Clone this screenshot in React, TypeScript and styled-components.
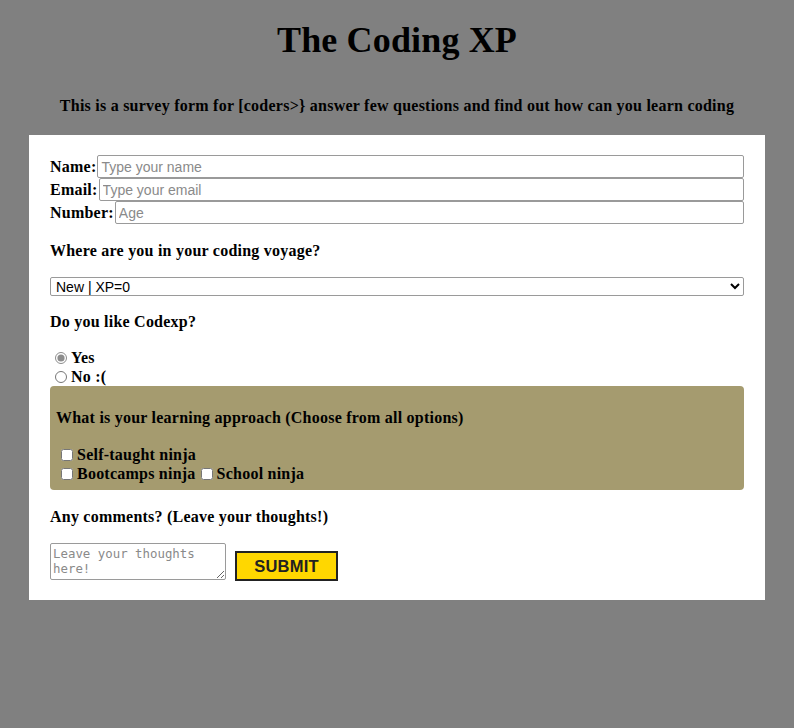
import React from "react";
import styled, { createGlobalStyle } from "styled-components";

const Global = createGlobalStyle`
  html, body {
    margin: 0;
    padding: 0;
    background: #808080;
    font-family: "Liberation Serif", "Times New Roman", serif;
    color: #000;
  }
`;

const Page = styled.div`
  min-height: 728px;
  padding-top: 20px;
  box-sizing: border-box;
`;

const Title = styled.h1`
  margin: 0;
  text-align: center;
  font-size: 36px;
  line-height: 41px;
  font-weight: bold;
  letter-spacing: 0.15px;
`;

const Subtitle = styled.h4`
  margin: 36px 0 20px;
  text-align: center;
  font-size: 16px;
  line-height: 18px;
  font-weight: bold;
  letter-spacing: 0.24px;
`;

const Panel = styled.form`
  width: 736px;
  margin: 0 auto;
  background: #fff;
  box-sizing: border-box;
  padding: 20px 21px 20px;
  display: flex;
  flex-direction: column;
  letter-spacing: 0.23px;
`;

const FieldRow = styled.label`
  display: flex;
  align-items: center;
  height: 23px;
  font-size: 16px;
  font-weight: bold;
  line-height: 18px;
`;

const TextInput = styled.input`
  flex: 1;
  height: 23px;
  box-sizing: border-box;
  margin: 0 0 0 1px;
  border: 1px solid #9a9a9a;
  border-radius: 2px;
  padding: 1px 3px;
  font-family: "Liberation Sans", Arial, sans-serif;
  font-size: 14px;
  letter-spacing: 0;
  &::placeholder {
    color: #8a8a8a;
  }
`;

const Question = styled.h4<{ $top: number }>`
  margin: ${(p) => p.$top}px 0 0;
  font-size: 16px;
  line-height: 18px;
  font-weight: bold;
`;

const Select = styled.select`
  margin-top: 17px;
  height: 19px;
  box-sizing: border-box;
  border: 1px solid #9a9a9a;
  border-radius: 2px;
  font-family: "Liberation Sans", Arial, sans-serif;
  font-size: 14px;
  letter-spacing: 0;
  padding: 0 1px;
  background: #fff;
  color: #000;
`;

const RadioGroup = styled.div`
  margin-top: 17px;
  display: flex;
  flex-direction: column;
`;

const ChoiceLine = styled.div`
  display: flex;
  align-items: center;
  height: 19px;
  font-size: 16px;
  font-weight: bold;
`;

const Radio = styled.input.attrs({ type: "radio" })`
  width: 12px;
  height: 12px;
  margin: 0 4px 0 5px;
  accent-color: #8c8c8c;
`;

const Approach = styled.div`
  background: #a59b6f;
  border-radius: 4px;
  padding: 23px 6px 7px;
  display: flex;
  flex-direction: column;
`;

const ApproachTitle = styled.h4`
  margin: 0 0 18px;
  font-size: 16px;
  line-height: 18px;
  font-weight: bold;
`;

const Check = styled.input.attrs({ type: "checkbox" })`
  width: 12px;
  height: 12px;
  margin: 0 4px 0 5px;
  accent-color: #fff;
`;

const Bottom = styled.div`
  margin-top: 17px;
  display: flex;
  align-items: flex-end;
  gap: 9px;
`;

const Comments = styled.textarea`
  width: 176px;
  height: 37px;
  box-sizing: border-box;
  margin: 0;
  border: 1px solid #9a9a9a;
  border-radius: 2px;
  padding: 2px 2px;
  font-family: "DejaVu Sans Mono", "Liberation Mono", monospace;
  font-size: 12.4px;
  line-height: 15px;
  letter-spacing: 0;
  &::placeholder {
    color: #8a8a8a;
  }
`;

const Submit = styled.button`
  width: 103px;
  height: 30px;
  margin-bottom: -1px;
  background: #ffd700;
  border: 2px solid #222;
  font-family: "Liberation Sans", Arial, sans-serif;
  font-weight: bold;
  font-size: 16.5px;
  letter-spacing: 0.2px;
  color: #222;
  padding: 0;
`;

export default function App() {
  return (
    <Page>
      <Global />
      <Title>The Coding XP</Title>
      <Subtitle>
        This is a survey form for [coders&gt;{"}"} answer few questions and find out how can you learn coding
      </Subtitle>
      <Panel onSubmit={(e) => e.preventDefault()}>
        <FieldRow>
          Name:<TextInput type="text" placeholder="Type your name" />
        </FieldRow>
        <FieldRow>
          Email:<TextInput type="email" placeholder="Type your email" />
        </FieldRow>
        <FieldRow>
          Number:<TextInput type="number" placeholder="Age" />
        </FieldRow>

        <Question $top={18}>Where are you in your coding voyage?</Question>
        <Select defaultValue="new">
          <option value="new">New | XP=0</option>
          <option value="mid">Intermediate | XP=50</option>
          <option value="pro">Pro | XP=100</option>
        </Select>

        <Question $top={17}>Do you like Codexp?</Question>
        <RadioGroup>
          <ChoiceLine>
            <Radio name="like" defaultChecked />
            Yes
          </ChoiceLine>
          <ChoiceLine>
            <Radio name="like" />
            No :(
          </ChoiceLine>
        </RadioGroup>

        <Approach>
          <ApproachTitle>What is your learning approach (Choose from all options)</ApproachTitle>
          <ChoiceLine>
            <Check />
            Self-taught ninja
          </ChoiceLine>
          <ChoiceLine>
            <Check />
            Bootcamps ninja
            <Check />
            School ninja
          </ChoiceLine>
        </Approach>

        <Question $top={18}>Any comments? (Leave your thoughts!)</Question>
        <Bottom>
          <Comments placeholder="Leave your thoughts here!" />
          <Submit type="submit">SUBMIT</Submit>
        </Bottom>
      </Panel>
    </Page>
  );
}
